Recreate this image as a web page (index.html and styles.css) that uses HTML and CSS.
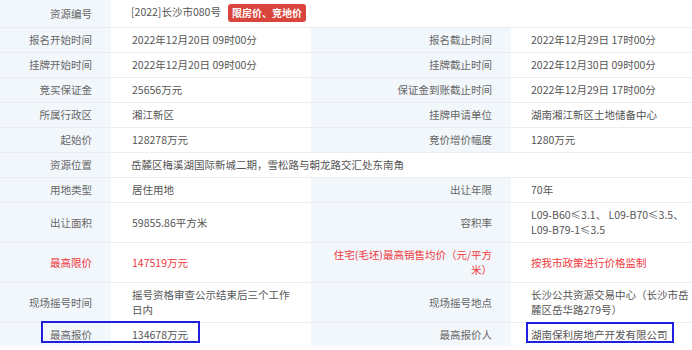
FILE: index.html
```html
<!DOCTYPE html>
<html lang="zh-CN">
<head>
<meta charset="utf-8">
<title>资源信息</title>
<link rel="stylesheet" href="styles.css">
</head>
<body>
<div class="wrap">
  <table class="info">
    <colgroup>
      <col class="c-l1">
      <col class="c-v1">
      <col class="c-l2">
      <col class="c-v2">
    </colgroup>
    <tbody>
      <tr>
        <th>资源编号</th>
        <td colspan="3">[2022]长沙市080号<span class="badge">限房价、竞地价</span></td>
      </tr>
      <tr>
        <th>报名开始时间</th><td>2022年12月20日 09时00分</td>
        <th>报名截止时间</th><td>2022年12月29日 17时00分</td>
      </tr>
      <tr>
        <th>挂牌开始时间</th><td>2022年12月20日 09时00分</td>
        <th>挂牌截止时间</th><td>2022年12月30日 09时00分</td>
      </tr>
      <tr>
        <th>竞买保证金</th><td>25656万元</td>
        <th>保证金到账截止时间</th><td>2022年12月29日 17时00分</td>
      </tr>
      <tr>
        <th>所属行政区</th><td>湘江新区</td>
        <th>挂牌申请单位</th><td>湖南湘江新区土地储备中心</td>
      </tr>
      <tr>
        <th>起始价</th><td>128278万元</td>
        <th>竞价增价幅度</th><td>1280万元</td>
      </tr>
      <tr>
        <th>资源位置</th>
        <td colspan="3">岳麓区梅溪湖国际新城二期，雪松路与朝龙路交汇处东南角</td>
      </tr>
      <tr>
        <th>用地类型</th><td>居住用地</td>
        <th>出让年限</th><td>70年</td>
      </tr>
      <tr class="tall">
        <th>出让面积</th><td>59855.86平方米</td>
        <th>容积率</th><td><span class="nw">L09-B60≤3.1、</span> <span class="nw">L09-B70≤3.5、</span> <span class="nw">L09-B79-1≤3.5</span></td>
      </tr>
      <tr class="tall red">
        <th>最高限价</th><td>147519万元</td>
        <th>住宅(毛坯)最高销售均价（元/平方米）</th><td>按我市政策进行价格监制</td>
      </tr>
      <tr class="tall">
        <th>现场摇号时间</th><td>摇号资格审查公示结束后三个工作日内</td>
        <th>现场摇号地点</th><td>长沙公共资源交易中心（长沙市岳麓区岳华路279号）</td>
      </tr>
      <tr class="last">
        <th>最高报价</th><td>134678万元</td>
        <th>最高报价人</th><td>湖南保利房地产开发有限公司</td>
      </tr>
    </tbody>
  </table>
  <div class="mark mark-price"></div>
  <div class="mark mark-bidder"></div>
</div>
</body>
</html>
```

FILE: styles.css
```css
html, body {
  margin: 0;
  padding: 0;
  background: #ffffff;
  overflow: hidden;
}

.wrap {
  position: relative;
  width: 692px;
  height: 350px;
  overflow: hidden;
  font-family: "Noto Sans CJK SC", "Microsoft YaHei", sans-serif;
  font-size: 10.5px;
}

.info {
  border-collapse: collapse;
  table-layout: fixed;
  width: 711px;
}

.c-l1 { width: 111px; }
.c-v1 { width: 200px; }
.c-l2 { width: 200px; }
.c-v2 { width: 200px; }

.info th,
.info td {
  padding: 4px 18px 5px 21px;
  line-height: 15px;
  vertical-align: middle;
  border-bottom: 1px solid #eaeef2;
}

.info th {
  background: #f2f7fc;
  color: #666666;
  font-weight: normal;
  text-align: right;
  padding: 4px 19px 5px 20px;
}

.info td {
  color: #555555;
  text-align: left;
}

.info td:last-child {
  padding-left: 20px;
}

.nw {
  white-space: nowrap;
}

.tall th,
.tall td {
  height: 30px;
}

.red th,
.red td {
  color: #f0383b;
}

.last th,
.last td {
  border-bottom: none;
  padding-bottom: 3px;
}

.badge {
  display: inline-block;
  margin-left: 7px;
  padding: 0 4px;
  height: 18px;
  line-height: 18px;
  border-radius: 3px;
  background: #d9453d;
  color: #ffffff;
  font-size: 10px;
  font-weight: bold;
  vertical-align: middle;
}

.mark {
  position: absolute;
  border: 2px solid #1f1fdc;
  box-sizing: border-box;
}

.mark-price {
  left: 41px;
  top: 321px;
  width: 159px;
  height: 22px;
}

.mark-bidder {
  left: 526px;
  top: 322px;
  width: 148px;
  height: 21px;
}
```
